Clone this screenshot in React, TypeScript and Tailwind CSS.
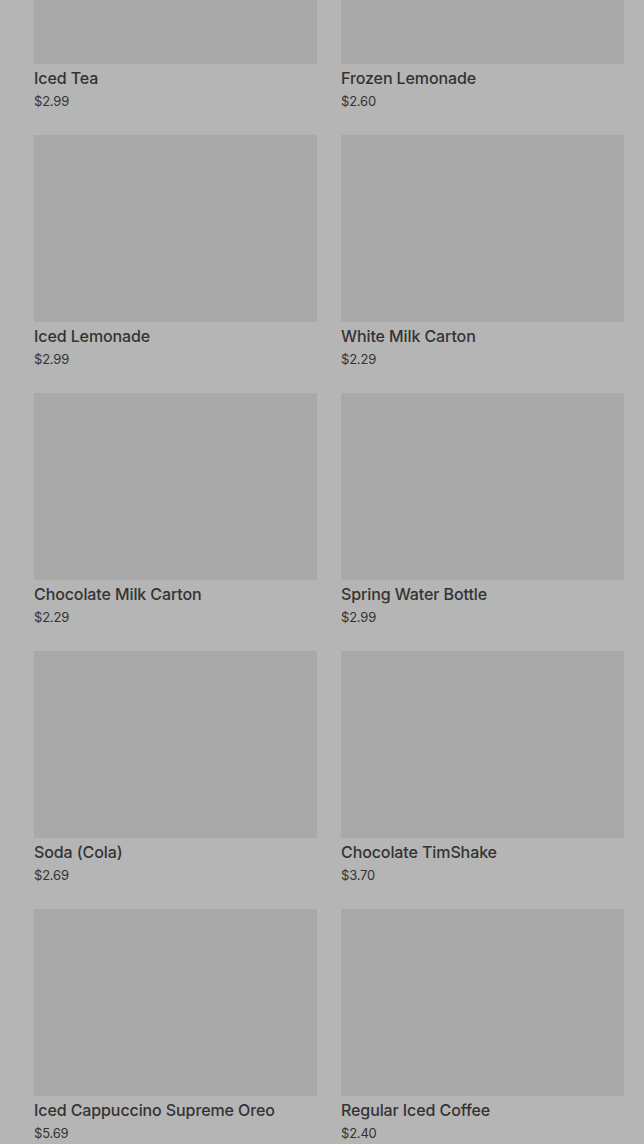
const items = [
  { name: "Iced Tea", price: "$2.99" },
  { name: "Frozen Lemonade", price: "$2.60" },
  { name: "Iced Lemonade", price: "$2.99" },
  { name: "White Milk Carton", price: "$2.29" },
  { name: "Chocolate Milk Carton", price: "$2.29" },
  { name: "Spring Water Bottle", price: "$2.99" },
  { name: "Soda (Cola)", price: "$2.69" },
  { name: "Chocolate TimShake", price: "$3.70" },
  { name: "Iced Cappuccino Supreme Oreo", price: "$5.69" },
  { name: "Regular Iced Coffee", price: "$2.40" },
];

function App() {
  return (
    <div
      className="min-h-[1144px] h-[1144px] overflow-hidden bg-[#b5b5b5] text-[#333333]"
      style={{ fontFamily: "Inter, 'Noto Sans', sans-serif" }}
    >
      <div className="mt-[-123px] grid grid-cols-2 gap-x-[24px] gap-y-[25px] pl-[34px] pr-[20px]">
        {items.map((item) => (
          <div key={item.name} className="flex flex-col">
            <div className="h-[187px] bg-[#a9a9a9]" />
            <div className="mt-[4px] text-[16px] leading-[20px] font-medium tracking-[-0.1px]">{item.name}</div>
            <div className="mt-[4px] text-[13px] leading-[18px] tracking-[-0.2px]">{item.price}</div>
          </div>
        ))}
      </div>
    </div>
  );
}

export default App;
